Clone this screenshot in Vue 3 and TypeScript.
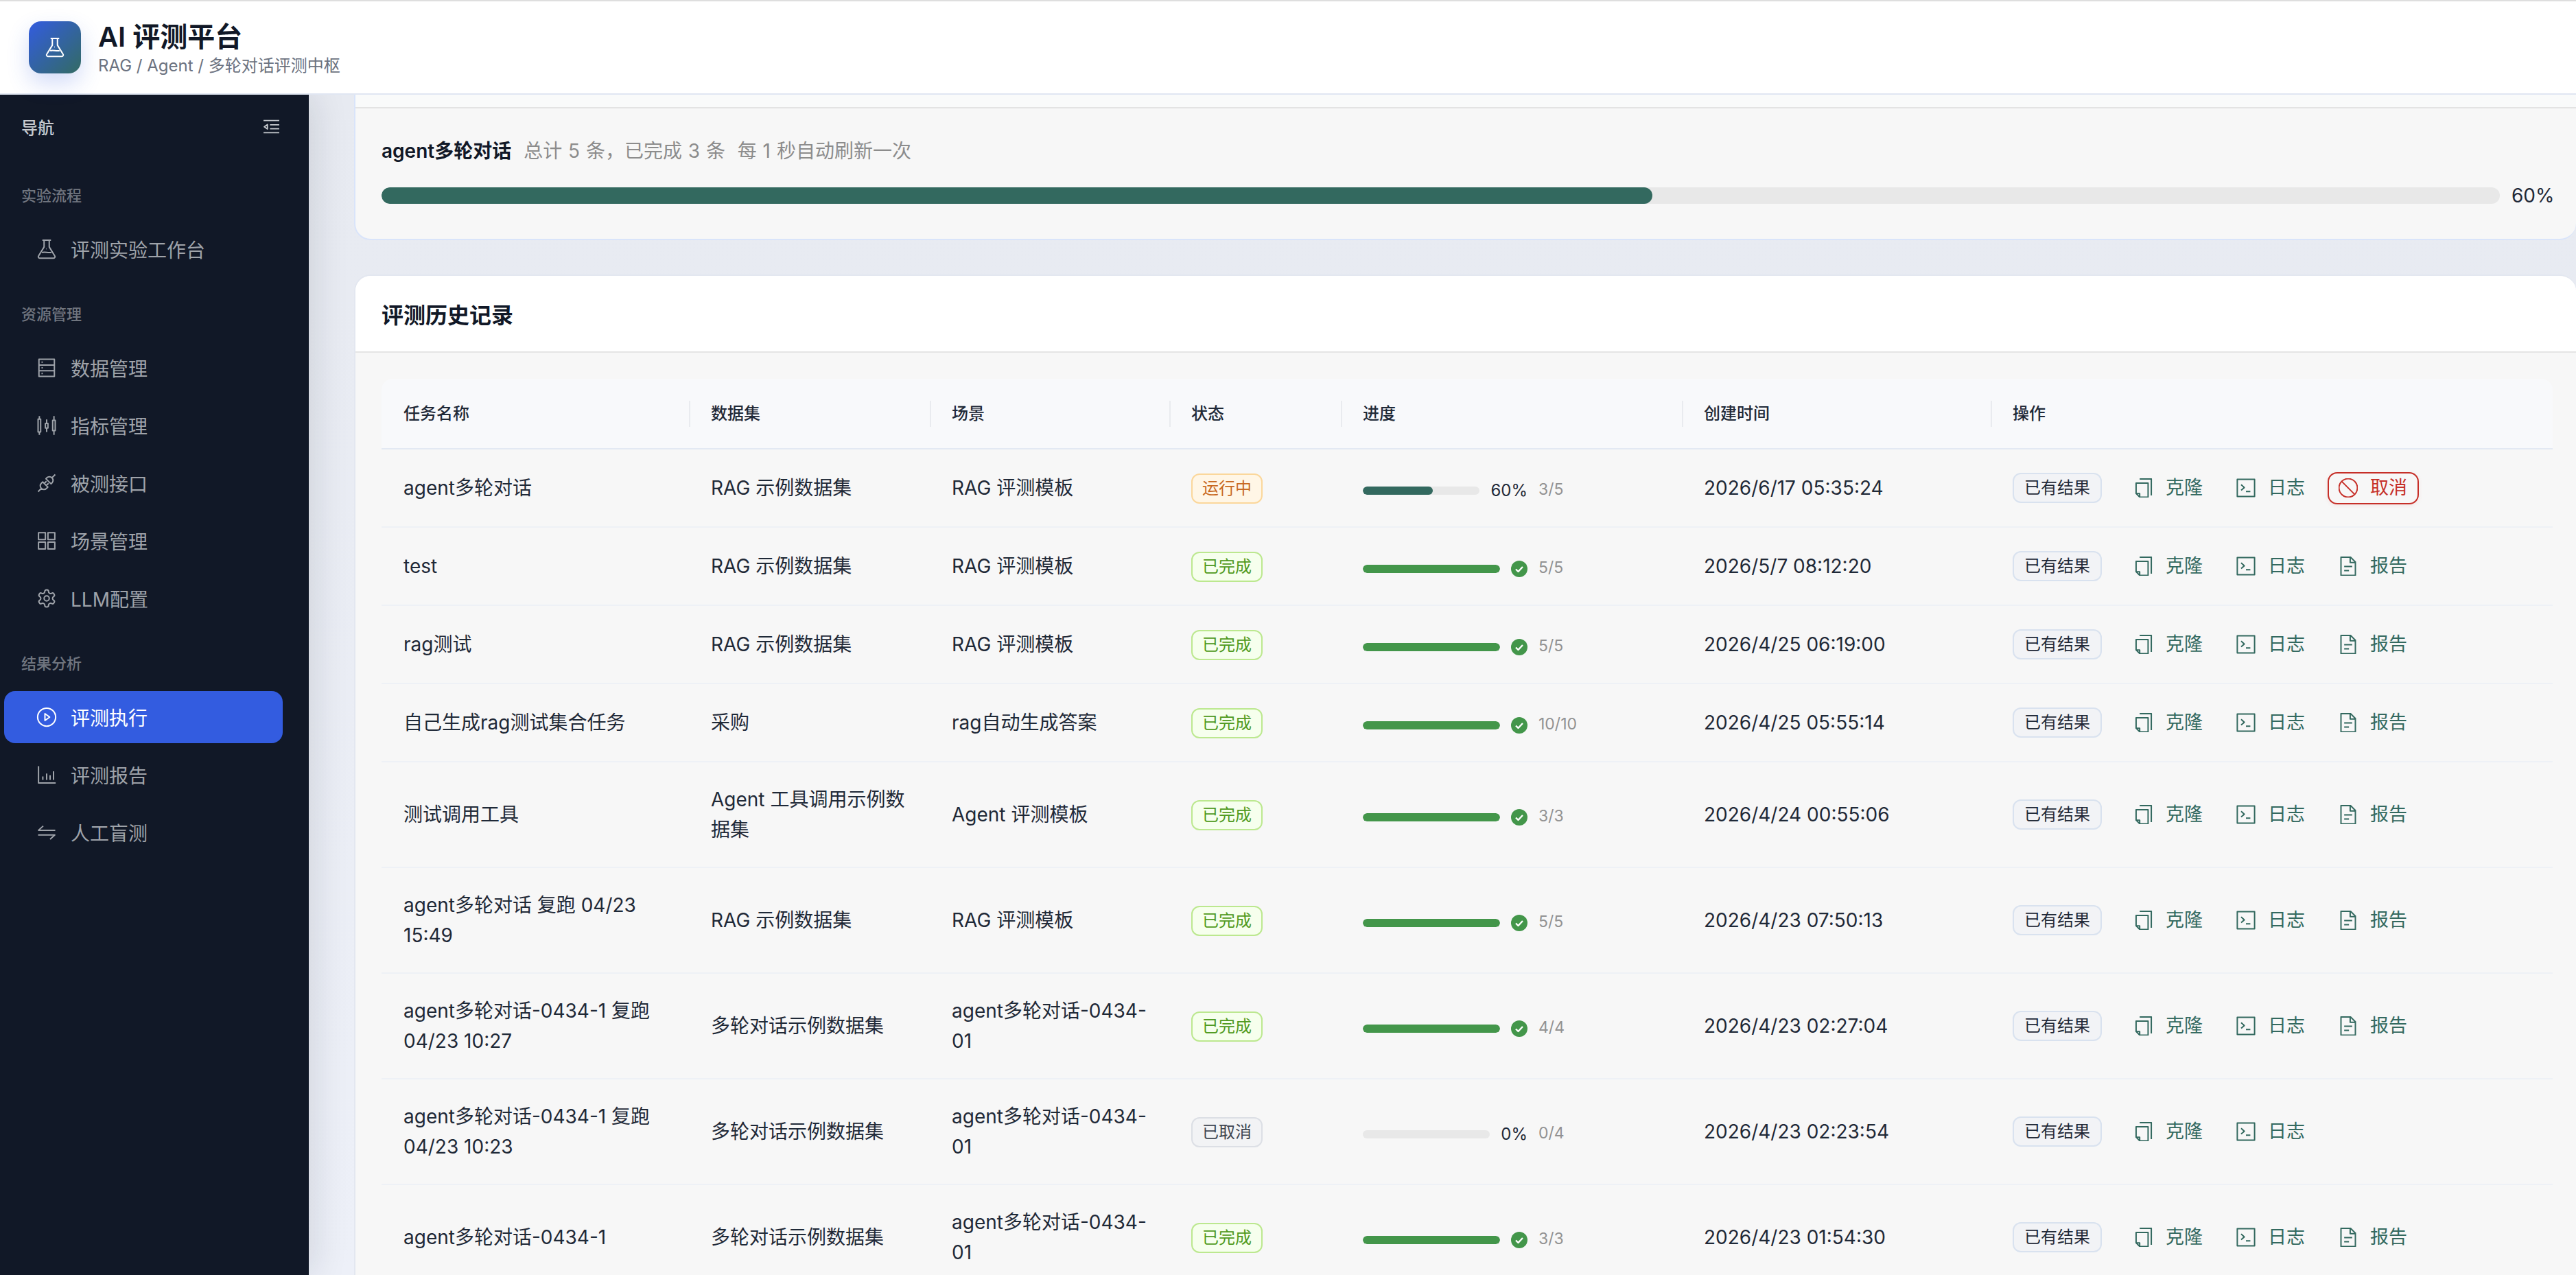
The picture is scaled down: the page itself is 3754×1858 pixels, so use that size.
<script setup lang="ts">
interface NavItem {
  label: string
  icon: string
  active?: boolean
}

interface NavGroup {
  title: string
  items: NavItem[]
}

interface Task {
  name: string
  dataset: string
  scene: string
  status: 'running' | 'done' | 'cancelled'
  percent: number
  count: string
  created: string
}

const icons: Record<string, string> = {
  flask: 'M7 1.5h10M9 1.5v8L2.5 20a1.6 1.6 0 0 0 1.4 2.5h16.2a1.6 1.6 0 0 0 1.4-2.5L15 9.5v-8M6.5 16c3.5-1.6 7 1 11-.2M11.5 11.5h.5',
  database: 'M3 2h18v20H3zM3 8.7h18M3 15.3h18M6 5.4h1.5M6 12h1.5M6 18.6h1.5',
  sliders: 'M3.5 1v3.5M3.5 19.5V23M2 4.5h3v15H2zM12 5v4.5M12 15v4.5M10.5 9.5h3v5.5h-3zM20.5 1v5M20.5 18v5M19 6h3v12h-3z',
  plug: 'M22 2l-3.8 3.8M2 22l3.8-3.8M18.2 5.8a4.2 4.2 0 0 0-6 0l-1.1 1.1 6 6 1.1-1.1a4.2 4.2 0 0 0 0-6zM5.8 18.2a4.2 4.2 0 0 1 0-6l1.6-1.6 6 6-1.6 1.6a4.2 4.2 0 0 1-6 0zM9.2 12.4l2.6-2.6M11.6 14.8l2.6-2.6',
  apps: 'M2.5 2.5h8v8h-8zM13.5 2.5h8v8h-8zM2.5 13.5h8v8h-8zM13.5 13.5h8v8h-8z',
  gear: 'M12.22 2h-.44a2 2 0 0 0-2 2v.18a2 2 0 0 1-1 1.73l-.43.25a2 2 0 0 1-2 0l-.15-.08a2 2 0 0 0-2.73.73l-.22.38a2 2 0 0 0 .73 2.73l.15.1a2 2 0 0 1 1 1.72v.51a2 2 0 0 1-1 1.74l-.15.09a2 2 0 0 0-.73 2.73l.22.38a2 2 0 0 0 2.73.73l.15-.08a2 2 0 0 1 2 0l.43.25a2 2 0 0 1 1 1.73V20a2 2 0 0 0 2 2h.44a2 2 0 0 0 2-2v-.18a2 2 0 0 1 1-1.73l.43-.25a2 2 0 0 1 2 0l.15.08a2 2 0 0 0 2.73-.73l.22-.39a2 2 0 0 0-.73-2.73l-.15-.08a2 2 0 0 1-1-1.74v-.5a2 2 0 0 1 1-1.74l.15-.09a2 2 0 0 0 .73-2.73l-.22-.38a2 2 0 0 0-2.73-.73l-.15.08a2 2 0 0 1-2 0l-.43-.25a2 2 0 0 1-1-1.73V4a2 2 0 0 0-2-2zM15 12a3 3 0 1 1-6 0 3 3 0 0 1 6 0z',
  play: 'M22.5 12a10.5 10.5 0 1 1-21 0 10.5 10.5 0 0 1 21 0zM10 8l5.5 4-5.5 4z',
  chart: 'M2.5 2v19.5h20M7.5 18v-4M12 18v-7.5M16 18v-5.5M20 18V8',
  swap: 'M22 9.5H2.5l5.5-5M2 15h19.5L16 20',
  outdent: 'M1 3.5h22M10 9.5h13M10 15h13M1 20.5h22M6.5 9l-4.5 3.2 4.5 3.2z',
  copy: 'M7 .8h14.5v20.7M2.5 6h15v17.5H7l-4.5-4.5zM2.5 19H7v4.5',
  terminal: 'M1.2 1.2h21.6v21.6H1.2zM6 8l4 3.5L6 15M12 16.5h5.5',
  file: 'M3 .8h12l6 6v16.7H3zM14.5 .8V7.5H21M7 12.5h10M7 17.5h6',
  stop: 'M23.5 12a11.5 11.5 0 1 1-23 0 11.5 11.5 0 0 1 23 0zM4 4l16 16'
}

const groups: NavGroup[] = [
  { title: '实验流程', items: [{ label: '评测实验工作台', icon: 'flask' }] },
  {
    title: '资源管理',
    items: [
      { label: '数据管理', icon: 'database' },
      { label: '指标管理', icon: 'sliders' },
      { label: '被测接口', icon: 'plug' },
      { label: '场景管理', icon: 'apps' },
      { label: 'LLM配置', icon: 'gear' }
    ]
  },
  {
    title: '结果分析',
    items: [
      { label: '评测执行', icon: 'play', active: true },
      { label: '评测报告', icon: 'chart' },
      { label: '人工盲测', icon: 'swap' }
    ]
  }
]

const columns = [
  { label: '任务名称', width: 448 },
  { label: '数据集', width: 351 },
  { label: '场景', width: 349 },
  { label: '状态', width: 250 },
  { label: '进度', width: 497 },
  { label: '创建时间', width: 450 },
  { label: '操作', width: 819 }
]

const ragSet = 'RAG 示例数据集'
const ragScene = 'RAG 评测模板'
const multiSet = '多轮对话示例数据集'
const multiScene = 'agent多轮对话-0434-01'

const tasks: Task[] = [
  { name: 'agent多轮对话', dataset: ragSet, scene: ragScene, status: 'running', percent: 60, count: '3/5', created: '2026/6/17 05:35:24' },
  { name: 'test', dataset: ragSet, scene: ragScene, status: 'done', percent: 100, count: '5/5', created: '2026/5/7 08:12:20' },
  { name: 'rag测试', dataset: ragSet, scene: ragScene, status: 'done', percent: 100, count: '5/5', created: '2026/4/25 06:19:00' },
  { name: '自己生成rag测试集合任务', dataset: '采购', scene: 'rag自动生成答案', status: 'done', percent: 100, count: '10/10', created: '2026/4/25 05:55:14' },
  { name: '测试调用工具', dataset: 'Agent 工具调用示例数据集', scene: 'Agent 评测模板', status: 'done', percent: 100, count: '3/3', created: '2026/4/24 00:55:06' },
  { name: 'agent多轮对话 复跑 04/23 15:49', dataset: ragSet, scene: ragScene, status: 'done', percent: 100, count: '5/5', created: '2026/4/23 07:50:13' },
  { name: 'agent多轮对话-0434-1 复跑 04/23 10:27', dataset: multiSet, scene: multiScene, status: 'done', percent: 100, count: '4/4', created: '2026/4/23 02:27:04' },
  { name: 'agent多轮对话-0434-1 复跑 04/23 10:23', dataset: multiSet, scene: multiScene, status: 'cancelled', percent: 0, count: '0/4', created: '2026/4/23 02:23:54' },
  { name: 'agent多轮对话-0434-1', dataset: multiSet, scene: multiScene, status: 'done', percent: 100, count: '3/3', created: '2026/4/23 01:54:30' }
]

const statusText: Record<Task['status'], string> = {
  running: '运行中',
  done: '已完成',
  cancelled: '已取消'
}
</script>

<template>
  <div class="page">
    <header class="topbar">
      <div class="logo">
        <svg class="logo-icon" viewBox="0 0 24 24"><path :d="icons.flask" /></svg>
      </div>
      <div class="brand">
        <div class="brand-title">AI 评测平台</div>
        <div class="brand-sub">RAG / Agent / 多轮对话评测中枢</div>
      </div>
    </header>

    <div class="body">
      <aside class="sidebar">
        <div class="side-head">
          <span>导航</span>
          <svg class="side-toggle" viewBox="0 0 24 24"><path :d="icons.outdent" /></svg>
        </div>
        <section v-for="group in groups" :key="group.title" class="side-group">
          <div class="side-title">{{ group.title }}</div>
          <ul class="side-list">
            <li v-for="item in group.items" :key="item.label" class="side-item" :class="{ active: item.active }">
              <svg class="side-icon" viewBox="0 0 24 24"><path :d="icons[item.icon]" /></svg>
              <span>{{ item.label }}</span>
            </li>
          </ul>
        </section>
      </aside>

      <main class="main">
        <section class="card live-card">
          <div class="live-strip"></div>
          <div class="live-body">
            <div class="live-line">
              <strong>agent多轮对话</strong>
              <span>总计 5 条，已完成 3 条&nbsp;&nbsp;每 1 秒自动刷新一次</span>
            </div>
            <div class="live-progress">
              <div class="live-track"><div class="live-fill" :style="{ width: '60%' }"></div></div>
              <span class="live-pct">60%</span>
            </div>
          </div>
        </section>

        <section class="card history-card">
          <h2 class="history-title">评测历史记录</h2>
          <div class="history-body">
            <table class="task-table">
              <colgroup>
                <col v-for="col in columns" :key="col.label" :style="{ width: col.width + 'px' }" />
              </colgroup>
              <thead>
                <tr>
                  <th v-for="col in columns" :key="col.label">{{ col.label }}</th>
                </tr>
              </thead>
              <tbody>
                <tr v-for="task in tasks" :key="task.created">
                  <td>{{ task.name }}</td>
                  <td>{{ task.dataset }}</td>
                  <td>{{ task.scene }}</td>
                  <td><span class="tag" :class="task.status">{{ statusText[task.status] }}</span></td>
                  <td>
                    <div class="progress-cell">
                      <div class="progress">
                        <div class="track">
                          <div class="fill" :class="task.status" :style="{ width: task.percent + '%' }"></div>
                        </div>
                        <span v-if="task.status === 'done'" class="check">
                          <svg viewBox="0 0 24 24"><path d="M7 12.5l3.5 3.5L17 9" /></svg>
                        </span>
                        <span v-else class="pct">{{ task.percent }}%</span>
                      </div>
                      <span class="count">{{ task.count }}</span>
                    </div>
                  </td>
                  <td>{{ task.created }}</td>
                  <td>
                    <div class="actions">
                      <span class="result-btn">已有结果</span>
                      <button class="link-btn first">
                        <svg viewBox="0 0 24 24"><path :d="icons.copy" /></svg>克隆
                      </button>
                      <button class="link-btn">
                        <svg viewBox="0 0 24 24"><path :d="icons.terminal" /></svg>日志
                      </button>
                      <button v-if="task.status === 'running'" class="link-btn danger">
                        <svg viewBox="0 0 24 24"><path :d="icons.stop" /></svg>取消
                      </button>
                      <button v-else-if="task.status === 'done'" class="link-btn">
                        <svg viewBox="0 0 24 24"><path :d="icons.file" /></svg>报告
                      </button>
                    </div>
                  </td>
                </tr>
              </tbody>
            </table>
          </div>
        </section>
      </main>
    </div>
  </div>
</template>

<style scoped>
.page {
  display: flex;
  flex-direction: column;
  height: 100vh;
  overflow: hidden;
  font-family: Inter, "Noto Sans CJK SC", sans-serif;
  color: #1f2937;
}

svg {
  fill: none;
  stroke: currentColor;
  stroke-width: 1.8;
  stroke-linejoin: round;
  flex: none;
}

.topbar {
  flex: none;
  box-sizing: border-box;
  height: 138px;
  display: flex;
  align-items: center;
  gap: 25px;
  padding-left: 42px;
  background: #fff;
  border-top: 2px solid #dedede;
  border-bottom: 2px solid #e0e6f2;
  position: relative;
  z-index: 2;
}

.logo {
  width: 76px;
  height: 76px;
  border-radius: 18px;
  display: flex;
  align-items: center;
  justify-content: center;
  background: linear-gradient(135deg, #335ce0, #336b63);
  color: #fff;
  box-shadow: 0 14px 32px rgba(51, 92, 224, 0.22);
}

.logo-icon {
  width: 30px;
  height: 30px;
  stroke-width: 1.6;
}

.brand {
  padding-top: 7px;
}

.brand-title {
  font-size: 40px;
  line-height: 46px;
  font-weight: 600;
  color: #111827;
}

.brand-sub {
  font-size: 24px;
  line-height: 38px;
  color: #6b7280;
}

.body {
  flex: 1;
  display: flex;
  min-height: 0;
}

.sidebar {
  flex: none;
  width: 450px;
  box-sizing: border-box;
  padding-top: 26px;
  background: #111827;
  box-shadow: 8px 0 48px rgba(15, 23, 42, 0.12);
  position: relative;
  z-index: 1;
}

.side-head {
  height: 40px;
  display: flex;
  align-items: center;
  justify-content: space-between;
  padding: 0 42px 0 31px;
  margin-bottom: 24px;
  font-size: 24px;
  font-weight: 500;
  color: #c8cbd0;
}

.side-toggle {
  width: 25px;
  height: 25px;
  stroke-width: 1.7;
}

.side-group {
  padding-top: 42px;
}

.side-title {
  padding-left: 31px;
  font-size: 22px;
  line-height: 30px;
  font-weight: 500;
  color: #70757f;
}

.side-list {
  list-style: none;
  margin: 25px 0 0;
  padding: 0;
  display: flex;
  flex-direction: column;
  gap: 8px;
}

.side-item {
  width: 406px;
  height: 76px;
  margin-left: 6px;
  box-sizing: border-box;
  display: flex;
  align-items: center;
  gap: 20px;
  padding-left: 47px;
  border-radius: 16px;
  font-size: 28px;
  color: #9fa3aa;
}

.side-item.active {
  background: #335ce0;
  color: #fff;
}

.side-icon {
  width: 30px;
  height: 30px;
  stroke-width: 1.6;
}

.main {
  flex: 1;
  min-width: 0;
  overflow: hidden;
  padding-left: 66px;
  background: linear-gradient(180deg, #e7eaf1, #edf0f8);
}

.card {
  box-sizing: border-box;
  background: #f7f7f7;
}

.live-card {
  border: 2px solid #d9e4fa;
  border-top: 0;
  border-right: 0;
  border-radius: 0 0 24px 24px;
}

.live-strip {
  height: 18px;
  background: #f9fafa;
  border-bottom: 2px solid #e3e3e3;
}

.live-body {
  padding: 40px 34px 51px 38px;
}

.live-line {
  display: flex;
  align-items: center;
  gap: 18px;
  height: 40px;
  font-size: 28px;
  word-spacing: 1px;
  color: #8c8c8c;
}

.live-line strong {
  font-weight: 600;
  color: #111827;
}

.live-progress {
  display: flex;
  align-items: center;
  gap: 17px;
  margin-top: 35px;
}

.live-track {
  flex: 1;
  height: 24px;
  border-radius: 12px;
  overflow: hidden;
  background: #e8e8e8;
}

.live-fill {
  height: 100%;
  border-radius: 12px;
  background: #33695f;
}

.live-pct {
  width: 60px;
  font-size: 28px;
  line-height: 24px;
  color: #1f2937;
}

.history-card {
  margin-top: 50px;
  border: 2px solid #e3e7f0;
  border-right: 0;
  border-bottom: 0;
  border-radius: 24px 24px 0 0;
  overflow: hidden;
}

.history-title {
  margin: 0;
  box-sizing: border-box;
  height: 112px;
  padding-left: 38px;
  display: flex;
  align-items: center;
  background: #fff;
  border-bottom: 2px solid #e5e5e5;
  font-size: 32px;
  font-weight: 600;
  color: #111827;
}

.history-body {
  padding: 38px 34px 0 38px;
}

.task-table {
  table-layout: fixed;
  width: 3164px;
  border-collapse: separate;
  border-spacing: 0;
  font-size: 28px;
  line-height: 44px;
  color: #1f2937;
}

th {
  position: relative;
  box-sizing: border-box;
  height: 103px;
  padding: 0 32px;
  text-align: left;
  font-size: 24px;
  font-weight: 500;
  color: #1f2937;
  background: #f8f9fb;
  border-bottom: 2px solid #e3e9f3;
}

th:first-child {
  border-top-left-radius: 16px;
}

th:last-child {
  border-top-right-radius: 16px;
}

th + th::before {
  content: "";
  position: absolute;
  left: 0;
  top: 32px;
  width: 2px;
  height: 38px;
  background: #e9ebef;
}

td {
  box-sizing: border-box;
  height: 114px;
  padding: 32px;
  border-bottom: 2px solid #eef1f6;
  word-break: break-word;
}

.tag {
  display: inline-block;
  box-sizing: border-box;
  height: 44px;
  padding: 0 14px;
  line-height: 40px;
  font-size: 24px;
  border: 2px solid;
  border-radius: 12px;
  vertical-align: middle;
}

.tag.running {
  color: #c8691f;
  background: #fff6e6;
  border-color: #fbd79b;
}

.tag.done {
  color: #4f9a20;
  background: #f6ffed;
  border-color: #bce88f;
}

.tag.cancelled {
  color: #3f4652;
  background: #f2f3f5;
  border-color: #dcdfe5;
}

.progress-cell {
  display: flex;
  align-items: center;
  gap: 16px;
}

.progress {
  width: 240px;
  display: flex;
  align-items: center;
  gap: 16px;
  margin-top: 8px;
}

.track {
  flex: 1;
  height: 12px;
  border-radius: 6px;
  overflow: hidden;
  background: #e8e8e8;
}

.fill {
  height: 100%;
  border-radius: 6px;
}

.fill.running {
  background: #33695f;
}

.fill.done {
  background: #43964a;
}

.check {
  width: 24px;
  height: 24px;
  border-radius: 50%;
  background: #43964a;
  color: #fff;
  display: flex;
}

.check svg {
  stroke-width: 2.4;
}

.pct {
  font-size: 24px;
  line-height: 30px;
  color: #1f2937;
}

.count {
  margin-top: 4px;
  font-size: 23px;
  line-height: 30px;
  color: #929292;
}

.actions {
  display: flex;
  align-items: center;
  gap: 16px;
}

.result-btn {
  flex: none;
  box-sizing: border-box;
  height: 44px;
  width: 130px;
  text-align: center;
  line-height: 40px;
  font-size: 24px;
  color: #1f2937;
  background: #f2f3f6;
  border: 2px solid #d9e2ef;
  border-radius: 12px;
}

.link-btn {
  flex: none;
  box-sizing: border-box;
  width: 133px;
  height: 47px;
  padding: 0 0 0 14px;
  display: flex;
  align-items: center;
  gap: 18px;
  font: inherit;
  font-size: 27px;
  color: #33695f;
  background: none;
  border: 2px solid transparent;
  border-radius: 14px;
}

.link-btn.first {
  margin-left: 15px;
}

.link-btn svg {
  width: 28px;
  height: 28px;
  stroke-width: 1.7;
}

.link-btn.danger {
  color: #c62f28;
  border-color: #c62f28;
  box-shadow: 0 2px 6px rgba(198, 47, 40, 0.08);
}
</style>

<style>
html,
body {
  margin: 0;
  overflow: hidden;
}
</style>
